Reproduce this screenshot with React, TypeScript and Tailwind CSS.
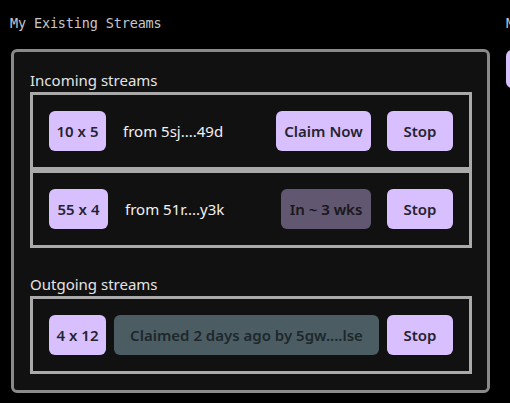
import React from "react"

const sans = { fontFamily: '"Noto Sans", "Open Sans", sans-serif' }

type Row = {
  amount: string
  amountWidth: string
  from: string
  action: string
  actionWidth: string
  pending?: boolean
}

const incoming: Row[] = [
  { amount: "10 x 5", amountWidth: "w-[57px]", from: "from 5sj....49d", action: "Claim Now", actionWidth: "w-[95px]" },
  { amount: "55 x 4", amountWidth: "w-[59px]", from: "from 51r....y3k", action: "In ~ 3 wks", actionWidth: "w-[90px]", pending: true },
]

function Pill({ children, className = "" }: { children: React.ReactNode; className?: string }) {
  return (
    <button
      className={`h-10 shrink-0 rounded-md bg-[#d8c0ff] text-[15px] font-semibold text-[#262330] ${className}`}
      style={sans}
    >
      {children}
    </button>
  )
}

function StreamBox({ children }: { children: React.ReactNode }) {
  return (
    <div className="flex h-[78px] w-[442px] items-center border-[3px] border-[#aaa] px-4">{children}</div>
  )
}

export default function App() {
  return (
    <div className="h-[403px] w-[510px] overflow-hidden bg-black">
      <div className="flex gap-4 pl-[11px] pt-[13px]">
        {/* existing streams */}
        <div className="w-[479px] shrink-0">
          <div
            className="h-5 text-[13.5px] leading-5 text-[#c8c8c8]"
            style={{ fontFamily: '"DejaVu Sans Mono", "Liberation Mono", monospace', marginLeft: -1, letterSpacing: "-0.15px" }}
          >
            My Existing Streams
          </div>
          <div className="mt-4 rounded-md border-[3px] border-[#8a8a8a] bg-[#111] pb-4 pl-4 pr-[15px] pt-4">
            <div className="h-6 text-[15px] leading-6 text-[#e4e4e4]" style={sans}>
              Incoming streams
            </div>
            <div className="flex flex-col">
              {incoming.map((r) => (
                <StreamBox key={r.from}>
                  <Pill className={r.amountWidth}>{r.amount}</Pill>
                  <span className="ml-[17px] text-[15px] text-[#f2f2f2]" style={sans}>
                    {r.from}
                  </span>
                  <div className="flex-1" />
                  <Pill className={`${r.actionWidth} ${r.pending ? "opacity-40" : ""}`}>{r.action}</Pill>
                  <Pill className="ml-4 w-[66px]">Stop</Pill>
                </StreamBox>
              ))}
            </div>
            <div className="mt-6 h-6 text-[15px] leading-6 text-[#e4e4e4]" style={sans}>
              Outgoing streams
            </div>
            <StreamBox>
              <Pill className="w-[57px]">4 x 12</Pill>
              <button
                className="ml-2 h-10 flex-1 rounded-md bg-[#4b5d63] text-[15px] font-semibold text-[#1e272b]"
                style={sans}
              >
                Claimed 2 days ago by 5gw....lse
              </button>
              <Pill className="ml-2 w-[66px]">Stop</Pill>
            </StreamBox>
          </div>
        </div>

        {/* new stream form (cut off) */}
        <div className="w-[300px] shrink-0">
          <div
            className="h-5 text-[13.5px] leading-5 text-[#c8c8c8]"
            style={{ fontFamily: '"DejaVu Sans Mono", "Liberation Mono", monospace' }}
          >
            Make a New Stream
          </div>
          <div className="mt-[17px] h-[38px] w-[200px] rounded-md bg-[#d8c0ff]" />
        </div>
      </div>
    </div>
  )
}
